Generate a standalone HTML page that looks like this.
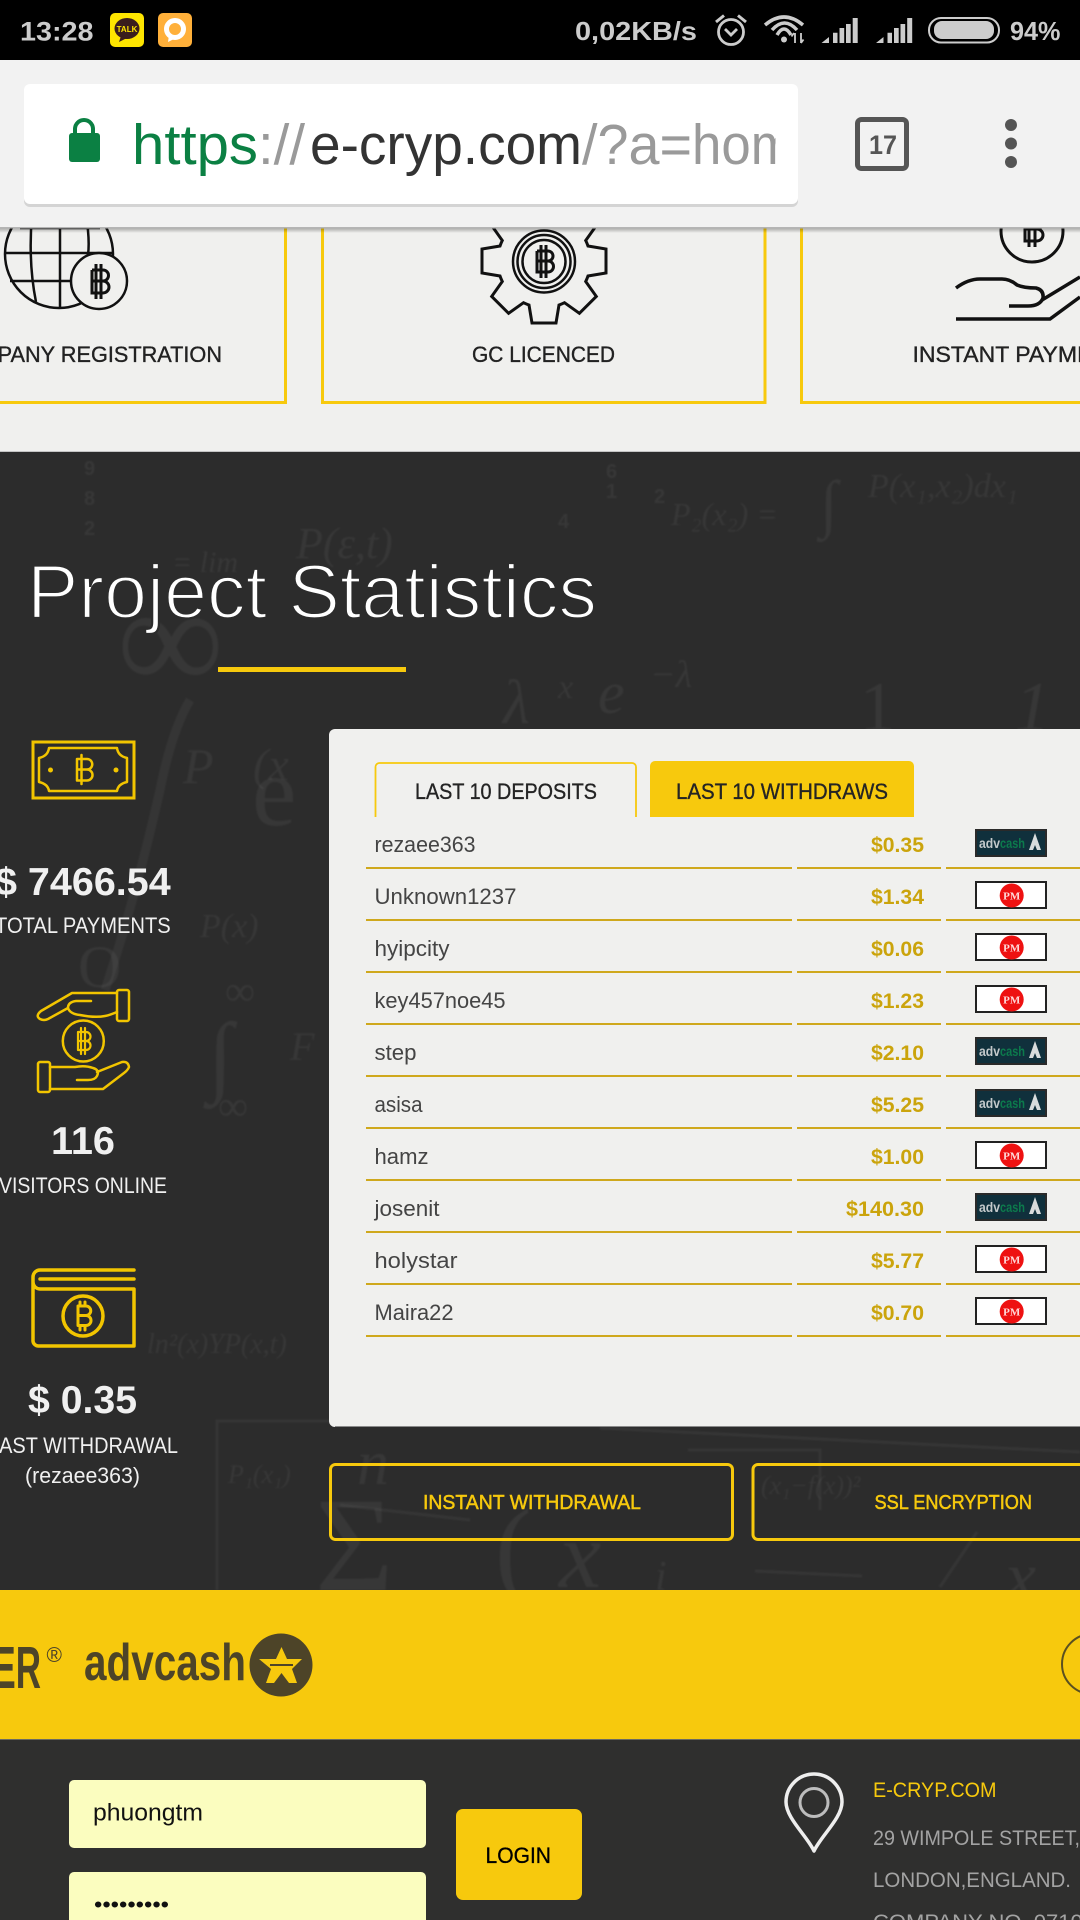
<!DOCTYPE html>
<html lang="en">
<head>
<meta charset="utf-8">
<title>e-cryp.com</title>
<style>
html,body{margin:0;padding:0;background:#2c2c2c;width:1080px;height:1920px;overflow:hidden}
svg{display:block}
text{font-family:"Liberation Sans",sans-serif}
.serif text{font-family:"Liberation Serif",serif;font-style:italic}
</style>
</head>
<body>
<svg xmlns="http://www.w3.org/2000/svg" width="1080" height="1920" viewBox="0 0 1080 1920">
<defs>
<clipPath id="urlclip"><rect x="100" y="100" width="675.500" height="90"/></clipPath>
<linearGradient id="tbshadow" x1="0" y1="0" x2="0" y2="1"><stop offset="0" stop-color="#000" stop-opacity=".3"/><stop offset="1" stop-color="#000" stop-opacity="0"/></linearGradient>
<filter id="soft" x="-5%" y="-5%" width="110%" height="110%"><feGaussianBlur stdDeviation=".8"/></filter>
</defs>

<!-- light section -->
<rect width="1080" height="452" fill="#f0f0ee"/>
<g fill="none" stroke="#f7c90d" stroke-width="3">
<path d="M-160 402.500H285.500V200"/>
<path d="M322.500 200V402.500H765V200"/>
<path d="M801.500 200V402.500H1090"/>
</g>
<g fill="none" stroke="#111" stroke-width="2.500">
<!-- globe -->
<circle cx="59" cy="254" r="54"/>
<path d="M5 253H113M10 281H75M20 228H100M60 200V308M32 215Q28 262 36 302M86 215Q90 240 88 255"/>
<circle cx="99" cy="281" r="28" fill="#f0f0ee"/>
<path stroke-width="3" d="M92 270H103a5.500 5.500 0 0 1 0 11H92M103 281a6 6 0 0 1 0 12H92V270M96 264V299M101 264V299"/>
<!-- gear -->
<path stroke-width="3" transform="translate(544 261)" d="M44 -15L62 -12V12L44 15A46 46 0 0 1 41.700 20.500L52.300 35.400L35.400 52.300L20.500 41.700A46 46 0 0 1 15 44L12 62H-12L-15 44A46 46 0 0 1 -20.500 41.700L-35.400 52.300L-52.300 35.400L-41.700 20.500A46 46 0 0 1 -44 15L-62 12V-12L-44 -15A46 46 0 0 1 -41.700 -20.500L-52.300 -35.400L-35.400 -52.300L-20.500 -41.700A46 46 0 0 1 -15 -44L-12 -62H12L15 -44A46 46 0 0 1 20.500 -41.700L35.400 -52.300L52.300 -35.400L41.700 -20.500A46 46 0 0 1 44 -15Z"/>
<circle cx="544" cy="261.500" r="31"/>
<circle cx="544" cy="261.500" r="26.500"/>
<circle cx="544" cy="261.500" r="21.500"/>
<path stroke-width="3" d="M537 251H548a5 5 0 0 1 0 10H537M548 261a5.500 5.500 0 0 1 0 11H537V251M541 245V278M546 245V278"/>
<!-- hand -->
<circle cx="1032" cy="231" r="31" stroke-width="3"/>
<path stroke-width="3" d="M1025 218H1037a5.500 5.500 0 0 1 0 11H1025M1037 229a6 6 0 0 1 0 12H1025V218M1029 212V247M1035 212V247"/>
<path stroke-width="3.500" d="M956 288Q968 279 980 279H1002Q1010 279 1017 285Q1024 288 1036 288Q1044 290 1043 298Q1040 306 1028 306H1009"/>
<path stroke-width="3.500" d="M1042 300L1080 277M956 319H1050L1080 297"/>
</g>
<g fill="#222" font-size="22" stroke="#222" stroke-width=".35">
<text x="-53" y="362" textLength="275" lengthAdjust="spacingAndGlyphs">COMPANY REGISTRATION</text>
<text x="472" y="362" textLength="143" lengthAdjust="spacingAndGlyphs">GC LICENCED</text>
<text x="912.500" y="362" textLength="226" lengthAdjust="spacingAndGlyphs" lang="en">INSTANT PAYMENTS</text>
</g>

<!-- dark section -->
<rect y="451" width="1080" height="1" fill="#c4c4c4"/>
<rect y="452" width="1080" height="1138" fill="#2c2c2c"/>
<g filter="url(#soft)">
<g class="serif" fill="#fff" fill-opacity=".05">
<text x="671" y="525" font-size="32">P₂(x₂) =</text>
<text x="820" y="525" font-size="64">∫</text>
<text x="868" y="497" font-size="34">P(x₁,x₂)dx₁</text>
<text x="172" y="572" font-size="30">= lim</text>
<text x="296" y="558" font-size="44">P(ε,t)</text>
<text x="503" y="723" font-size="62">λ</text>
<text x="558" y="698" font-size="34">x</text>
<text x="598" y="713" font-size="60">e</text>
<text x="650" y="687" font-size="38">−λ</text>
<text x="860" y="730" font-size="70" style="font-style:normal">1</text>
<text x="1015" y="730" font-size="70">1</text>
<text x="117" y="690" font-size="150" style="font-style:normal">∞</text>
<text x="225" y="1005" font-size="42" style="font-style:normal">∞</text>
<text x="218" y="1120" font-size="42" style="font-style:normal">∞</text>
<text x="208" y="1085" font-size="90">∫</text>
<text x="290" y="1060" font-size="40">F</text>
<text x="183" y="783" font-size="50">P</text>
<text x="253" y="780" font-size="46">(x</text>
<text x="252" y="825" font-size="100" style="font-style:normal">e</text>
<text x="78" y="987" font-size="60" style="font-style:normal">O</text>
<text x="200" y="937" font-size="34">P(x)</text>
<text x="147" y="1353" font-size="28">ln²(x)YP(x,t)</text>
<text x="228" y="1483" font-size="26">P₁(x₁)</text>
<text x="357" y="1484" font-size="64">n</text>
<text x="315" y="1590" font-size="135" style="font-style:normal">Σ</text>
<text x="495" y="1585" font-size="110" style="font-style:normal">(</text>
<text x="559" y="1587" font-size="95">x</text>
<text x="655" y="1590" font-size="42">i</text>
<text x="761" y="1494" font-size="26">(x₁−f(x))²</text>
<text x="1005" y="1600" font-size="70">x</text>
</g>
<path d="M217 1590V1421H330M600 1428L1080 1452M688 1450H820V1510M340 1505L470 1520M755 1571L862 1576M977 1532L940 1587" fill="none" stroke="#fff" stroke-opacity=".045" stroke-width="3"/>
<path d="M190 700Q172 730 160 790Q135 900 105 990" fill="none" stroke="#fff" stroke-opacity=".045" stroke-width="9"/>
<g fill="#fff" fill-opacity=".05" font-size="20" font-weight="bold">
<text x="606" y="478">6</text><text x="606" y="498">1</text><text x="654" y="503">2</text><text x="558" y="528">4</text>
<text x="84" y="475">9</text><text x="84" y="505">8</text><text x="84" y="535">2</text>
</g>
</g>

<!-- heading -->
<text x="27" y="618" font-size="76" fill="#fff" stroke="#2c2c2c" stroke-width="2.200" textLength="570" lengthAdjust="spacingAndGlyphs">Project Statistics</text>
<rect x="218" y="667" width="188" height="5" fill="#f7c90d"/>

<!-- left icons -->
<g fill="none" stroke="#f2c500" stroke-width="3" stroke-linejoin="round" stroke-linecap="round">
<rect x="33" y="742" width="101" height="56" stroke-linejoin="miter"/>
<path stroke-width="2.500" d="M49 748H117Q118 756 127 758V782Q118 784 117 791H49Q48 784 39 782V758Q48 756 49 748Z"/>
<path stroke-width="2.500" d="M77 759H87a5 5 0 0 1 0 10.500H77M87 769.500a5.500 5.500 0 0 1 0 11H77V759M81.500 755V784"/>
<circle cx="50.500" cy="770" r="2.500" fill="#f2c500" stroke="none"/>
<circle cx="116" cy="770" r="2.500" fill="#f2c500" stroke="none"/>
<!-- hands -->
<rect x="117" y="990" width="12" height="31" rx="2" stroke-width="2.500"/>
<path stroke-width="2.500" d="M117 993H72L41 1011Q35 1016 40 1019Q44 1021 48 1019L68 1008"/>
<path stroke-width="2.500" d="M91 1001H76Q68 1002 68 1008Q70 1014 80 1015Q95 1018 105 1016Q110 1015 117 1012"/>
<circle cx="83.300" cy="1041" r="20.500" stroke-width="2.500"/>
<path stroke-width="2.200" d="M78 1032H86a4.500 4.500 0 0 1 0 9H78M86 1041a4.500 4.500 0 0 1 0 9H78V1032M81 1028V1054M85 1028V1054"/>
<rect x="38" y="1062" width="12" height="30" rx="2" stroke-width="2.500"/>
<path stroke-width="2.500" d="M50 1067H75Q85 1065 93 1068Q100 1070 97 1076Q95 1080 88 1080H77M97 1072L122 1062Q128 1061 129 1067Q128 1070 124 1073L103 1089H50"/>
<!-- wallet -->
<path stroke-width="3.500" d="M134 1270H40a7 7 0 0 0 -7 7V1340a5.500 5.500 0 0 0 6 6H134V1289H40a7 7 0 0 1 -7 -7M134 1279H40"/>
<circle cx="83" cy="1316" r="20" stroke-width="3.500"/>
<path stroke-width="3" d="M78 1306H86a4.500 4.500 0 0 1 0 9.500H78M86 1315.500a5 5 0 0 1 0 10H78V1306M80 1302V1306M85 1302V1306M80 1326V1330M85 1326V1330"/>
</g>

<!-- left text -->
<g fill="#f0f0f0">
<text x="-5" y="895" font-size="39" font-weight="bold" textLength="175.700" lengthAdjust="spacingAndGlyphs">$ 7466.54</text>
<text x="-5" y="933" font-size="22" textLength="175.700" lengthAdjust="spacingAndGlyphs">TOTAL PAYMENTS</text>
<text x="51" y="1154" font-size="39" font-weight="bold" textLength="64" lengthAdjust="spacingAndGlyphs">116</text>
<text x="-1" y="1193" font-size="22" textLength="168" lengthAdjust="spacingAndGlyphs">VISITORS ONLINE</text>
<text x="28" y="1413" font-size="39" font-weight="bold" textLength="109" lengthAdjust="spacingAndGlyphs">$ 0.35</text>
<text x="-12" y="1453" font-size="22" textLength="190" lengthAdjust="spacingAndGlyphs">LAST WITHDRAWAL</text>
<text x="25" y="1483" font-size="22" textLength="115" lengthAdjust="spacingAndGlyphs">(rezaee363)</text>
</g>

<!-- panel -->
<rect x="329" y="729" width="780" height="698" rx="6" fill="#f0f0ee"/>
<rect x="335" y="1426" width="745" height="1" fill="#8a8a8a"/>
<path d="M375.500 817V767a4 4 0 0 1 4 -4H632a4 4 0 0 1 4 4V817" fill="none" stroke="#f7c90d" stroke-width="1.800"/>
<path d="M650 817V766a5 5 0 0 1 5 -5H909a5 5 0 0 1 5 5V817Z" fill="#f7c90d"/>
<g fill="#242424" font-size="22" stroke="#242424" stroke-width=".35">
<text x="415" y="799" textLength="182" lengthAdjust="spacingAndGlyphs">LAST 10 DEPOSITS</text>
<text x="676" y="799" textLength="212" lengthAdjust="spacingAndGlyphs">LAST 10 WITHDRAWS</text>
</g>

<!-- rows lines -->
<g fill="#cfa81c">
<rect x="366" y="867" width="426" height="2"/><rect x="797" y="867" width="144" height="2"/><rect x="946" y="867" width="134" height="2"/>
<rect x="366" y="919" width="426" height="2"/><rect x="797" y="919" width="144" height="2"/><rect x="946" y="919" width="134" height="2"/>
<rect x="366" y="971" width="426" height="2"/><rect x="797" y="971" width="144" height="2"/><rect x="946" y="971" width="134" height="2"/>
<rect x="366" y="1023" width="426" height="2"/><rect x="797" y="1023" width="144" height="2"/><rect x="946" y="1023" width="134" height="2"/>
<rect x="366" y="1075" width="426" height="2"/><rect x="797" y="1075" width="144" height="2"/><rect x="946" y="1075" width="134" height="2"/>
<rect x="366" y="1127" width="426" height="2"/><rect x="797" y="1127" width="144" height="2"/><rect x="946" y="1127" width="134" height="2"/>
<rect x="366" y="1179" width="426" height="2"/><rect x="797" y="1179" width="144" height="2"/><rect x="946" y="1179" width="134" height="2"/>
<rect x="366" y="1231" width="426" height="2"/><rect x="797" y="1231" width="144" height="2"/><rect x="946" y="1231" width="134" height="2"/>
<rect x="366" y="1283" width="426" height="2"/><rect x="797" y="1283" width="144" height="2"/><rect x="946" y="1283" width="134" height="2"/>
<rect x="366" y="1335" width="426" height="2"/><rect x="797" y="1335" width="144" height="2"/><rect x="946" y="1335" width="134" height="2"/>
</g>
<g fill="#444" font-size="22">
<text x="374.500" y="852" textLength="101" lengthAdjust="spacingAndGlyphs">rezaee363</text>
<text x="374.500" y="904" textLength="142" lengthAdjust="spacingAndGlyphs">Unknown1237</text>
<text x="374.500" y="956" textLength="75" lengthAdjust="spacingAndGlyphs">hyipcity</text>
<text x="374.500" y="1008" textLength="131" lengthAdjust="spacingAndGlyphs">key457noe45</text>
<text x="374.500" y="1060" textLength="42" lengthAdjust="spacingAndGlyphs">step</text>
<text x="374.500" y="1112" textLength="48" lengthAdjust="spacingAndGlyphs">asisa</text>
<text x="374.500" y="1164" textLength="54" lengthAdjust="spacingAndGlyphs">hamz</text>
<text x="374.500" y="1216" textLength="65" lengthAdjust="spacingAndGlyphs">josenit</text>
<text x="374.500" y="1268" textLength="83" lengthAdjust="spacingAndGlyphs">holystar</text>
<text x="374.500" y="1320" textLength="79" lengthAdjust="spacingAndGlyphs">Maira22</text>
</g>
<g fill="#cba40c" font-size="21" font-weight="bold">
<text x="871" y="852" textLength="53" lengthAdjust="spacingAndGlyphs">$0.35</text>
<text x="871" y="904" textLength="53" lengthAdjust="spacingAndGlyphs">$1.34</text>
<text x="871" y="956" textLength="53" lengthAdjust="spacingAndGlyphs">$0.06</text>
<text x="871" y="1008" textLength="53" lengthAdjust="spacingAndGlyphs">$1.23</text>
<text x="871" y="1060" textLength="53" lengthAdjust="spacingAndGlyphs">$2.10</text>
<text x="871" y="1112" textLength="53" lengthAdjust="spacingAndGlyphs">$5.25</text>
<text x="871" y="1164" textLength="53" lengthAdjust="spacingAndGlyphs">$1.00</text>
<text x="846" y="1216" textLength="78" lengthAdjust="spacingAndGlyphs">$140.30</text>
<text x="871" y="1268" textLength="53" lengthAdjust="spacingAndGlyphs">$5.77</text>
<text x="871" y="1320" textLength="53" lengthAdjust="spacingAndGlyphs">$0.70</text>
</g>

<!-- badges: advcash rows -->
<g font-size="14" font-weight="bold">
<g>
<rect x="976" y="830" width="70" height="26" fill="#10303c" stroke="#2a2a2a" stroke-width="2"/>
<text x="979" y="848" fill="#c4c9cb" textLength="21" lengthAdjust="spacingAndGlyphs">adv</text><text x="1000" y="848" fill="#0c7a4c" textLength="25" lengthAdjust="spacingAndGlyphs">cash</text>
<path d="M1035 833L1041 850H1037L1035 845L1033 850H1029Z" fill="#d8dcdc"/>
</g>
<g>
<rect x="976" y="1038" width="70" height="26" fill="#10303c" stroke="#2a2a2a" stroke-width="2"/>
<text x="979" y="1056" fill="#c4c9cb" textLength="21" lengthAdjust="spacingAndGlyphs">adv</text><text x="1000" y="1056" fill="#0c7a4c" textLength="25" lengthAdjust="spacingAndGlyphs">cash</text>
<path d="M1035 1041L1041 1058H1037L1035 1053L1033 1058H1029Z" fill="#d8dcdc"/>
</g>
<g>
<rect x="976" y="1090" width="70" height="26" fill="#10303c" stroke="#2a2a2a" stroke-width="2"/>
<text x="979" y="1108" fill="#c4c9cb" textLength="21" lengthAdjust="spacingAndGlyphs">adv</text><text x="1000" y="1108" fill="#0c7a4c" textLength="25" lengthAdjust="spacingAndGlyphs">cash</text>
<path d="M1035 1093L1041 1110H1037L1035 1105L1033 1110H1029Z" fill="#d8dcdc"/>
</g>
<g>
<rect x="976" y="1194" width="70" height="26" fill="#10303c" stroke="#2a2a2a" stroke-width="2"/>
<text x="979" y="1212" fill="#c4c9cb" textLength="21" lengthAdjust="spacingAndGlyphs">adv</text><text x="1000" y="1212" fill="#0c7a4c" textLength="25" lengthAdjust="spacingAndGlyphs">cash</text>
<path d="M1035 1197L1041 1214H1037L1035 1209L1033 1214H1029Z" fill="#d8dcdc"/>
</g>
</g>
<!-- badges: PM rows -->
<g>
<rect x="976" y="882" width="70" height="26" fill="#fff" stroke="#222" stroke-width="2"/><circle cx="1011.700" cy="895.500" r="12" fill="#ee1111"/>
<rect x="976" y="934" width="70" height="26" fill="#fff" stroke="#222" stroke-width="2"/><circle cx="1011.700" cy="947.500" r="12" fill="#ee1111"/>
<rect x="976" y="986" width="70" height="26" fill="#fff" stroke="#222" stroke-width="2"/><circle cx="1011.700" cy="999.500" r="12" fill="#ee1111"/>
<rect x="976" y="1142" width="70" height="26" fill="#fff" stroke="#222" stroke-width="2"/><circle cx="1011.700" cy="1155.500" r="12" fill="#ee1111"/>
<rect x="976" y="1246" width="70" height="26" fill="#fff" stroke="#222" stroke-width="2"/><circle cx="1011.700" cy="1259.500" r="12" fill="#ee1111"/>
<rect x="976" y="1298" width="70" height="26" fill="#fff" stroke="#222" stroke-width="2"/><circle cx="1011.700" cy="1311.500" r="12" fill="#ee1111"/>
</g>
<g fill="#ffd9d9" font-size="11" font-weight="bold" text-anchor="middle">
<text x="1011.700" y="899.500" style="font-family:'Liberation Serif',serif">PM</text>
<text x="1011.700" y="951.500" style="font-family:'Liberation Serif',serif">PM</text>
<text x="1011.700" y="1003.500" style="font-family:'Liberation Serif',serif">PM</text>
<text x="1011.700" y="1159.500" style="font-family:'Liberation Serif',serif">PM</text>
<text x="1011.700" y="1263.500" style="font-family:'Liberation Serif',serif">PM</text>
<text x="1011.700" y="1315.500" style="font-family:'Liberation Serif',serif">PM</text>
</g>

<!-- feature buttons -->
<rect x="330.500" y="1464.500" width="402" height="75" rx="5" fill="none" stroke="#f7c90d" stroke-width="3"/>
<rect x="753" y="1464.500" width="400" height="75" rx="5" fill="none" stroke="#f7c90d" stroke-width="3"/>
<g fill="#f7c90d" font-size="20" stroke="#f7c90d" stroke-width=".5">
<text x="423" y="1509" textLength="218" lengthAdjust="spacingAndGlyphs">INSTANT WITHDRAWAL</text>
<text x="874.500" y="1509" textLength="157.500" lengthAdjust="spacingAndGlyphs">SSL ENCRYPTION</text>
</g>

<!-- yellow band -->
<rect y="1590" width="1080" height="149" fill="#f7c90d"/>
<g fill="#4d4428">
<text x="-97" y="1688" font-size="59" font-weight="bold" textLength="138" lengthAdjust="spacingAndGlyphs">PAYEER</text>
<text x="46.500" y="1662" font-size="21">®</text>
<text x="84" y="1680" font-size="52" font-weight="bold" textLength="162" lengthAdjust="spacingAndGlyphs">advcash</text>
<circle cx="281" cy="1665" r="31.500"/>
</g>
<path d="M281.500 1647L287 1659H302L292 1669L297 1683H289L281.500 1673L274 1683H266L271 1669L259 1659H276Z" fill="#f7c90d"/>
<rect x="270" y="1664" width="23" height="2" fill="#4d4428"/>
<circle cx="1092" cy="1664" r="30" fill="none" stroke="#5a5020" stroke-width="2"/>

<!-- footer -->
<rect y="1739" width="1080" height="181" fill="#2f2f2e"/>
<rect y="1739" width="1080" height="1" fill="#6b6b60"/>
<rect x="69" y="1780" width="357" height="68" rx="5" fill="#fbfdbf"/>
<rect x="69" y="1872" width="357" height="60" rx="5" fill="#fbfdbf"/>
<text x="93" y="1820.500" font-size="24" fill="#111" textLength="110" lengthAdjust="spacingAndGlyphs">phuongtm</text>
<text x="94" y="1912" font-size="22" fill="#111" textLength="75" lengthAdjust="spacingAndGlyphs">•••••••••</text>
<rect x="456" y="1809" width="126" height="91" rx="7" fill="#f7c90d"/>
<text x="485.500" y="1863" font-size="22" fill="#000" stroke="#000" stroke-width=".3" textLength="65.500" lengthAdjust="spacingAndGlyphs">LOGIN</text>
<path d="M814 1851C807 1836 786 1818 786 1802A28 28 0 0 1 842 1802C842 1818 821 1836 814 1851Z" fill="none" stroke="#eee" stroke-width="3.500" stroke-linejoin="round"/>
<circle cx="814" cy="1802.500" r="14" fill="none" stroke="#bdbdbd" stroke-width="3"/>
<text x="873" y="1797" font-size="21" fill="#f7c90d" textLength="123.500" lengthAdjust="spacingAndGlyphs">E-CRYP.COM</text>
<g fill="#a3a3a3" font-size="21">
<text x="873" y="1845" textLength="207" lengthAdjust="spacingAndGlyphs">29 WIMPOLE STREET,</text>
<text x="873" y="1887" textLength="198" lengthAdjust="spacingAndGlyphs">LONDON,ENGLAND.</text>
<text x="873" y="1929" textLength="222" lengthAdjust="spacingAndGlyphs">COMPANY NO. 07106</text>
</g>

<!-- browser toolbar -->
<rect y="228" width="1080" height="5" fill="url(#tbshadow)"/>
<rect y="60" width="1080" height="168" fill="#f2f2f2"/>
<rect y="227" width="1080" height="1.500" fill="#b5b5b5"/>
<rect x="24" y="86" width="774" height="121" rx="6" fill="#000" fill-opacity=".12"/>
<rect x="24" y="84" width="774" height="120" rx="6" fill="#fff"/>
<path d="M75 136V129a9 9 0 0 1 18 0V136" fill="none" stroke="#0b8043" stroke-width="4"/>
<rect x="69" y="133" width="31" height="29" rx="3" fill="#0b8043"/>
<g font-size="56.500" clip-path="url(#urlclip)">
<text x="132" y="164" fill="#0b8043" textLength="126" lengthAdjust="spacingAndGlyphs">https</text>
<text x="258" y="164" fill="#9a9a9a" textLength="47" lengthAdjust="spacingAndGlyphs">://</text>
<text x="310" y="164" fill="#333" textLength="272" lengthAdjust="spacingAndGlyphs">e-cryp.com</text>
<text x="582" y="164" fill="#9a9a9a" textLength="110" lengthAdjust="spacingAndGlyphs">/?a=</text>
<text x="692" y="164" fill="#9a9a9a" textLength="132" lengthAdjust="spacingAndGlyphs">home</text>
</g>
<rect x="857.500" y="119.500" width="49" height="49" rx="4" fill="none" stroke="#555" stroke-width="5"/>
<text x="869" y="154" font-size="27" font-weight="bold" fill="#555" textLength="28" lengthAdjust="spacingAndGlyphs">17</text>
<g fill="#555">
<ellipse cx="1011" cy="125" rx="6" ry="6"/><ellipse cx="1011" cy="143.500" rx="6" ry="6"/><ellipse cx="1011" cy="162" rx="6" ry="6"/>
</g>

<!-- status bar -->
<rect width="1080" height="60" fill="#000"/>
<text x="20" y="40.500" font-size="27" font-weight="bold" fill="#ccc" textLength="73.500" lengthAdjust="spacingAndGlyphs">13:28</text>
<rect x="110" y="13" width="34" height="34" rx="5" fill="#fee500"/>
<ellipse cx="127" cy="28.500" rx="12.500" ry="10.500" fill="#3a1d1d"/>
<path d="M121 36L119 42L127 38Z" fill="#3a1d1d"/>
<text x="127" y="32" font-size="8" font-weight="bold" fill="#fee500" text-anchor="middle">TALK</text>
<rect x="158" y="13" width="34" height="34" rx="5" fill="#ffb03a"/>
<circle cx="175" cy="29" r="8.500" fill="none" stroke="#fff" stroke-width="5"/>
<path d="M169 35L168 42L176 38Z" fill="#fff"/>
<text x="575" y="40" font-size="26" font-weight="bold" fill="#ccc" textLength="122" lengthAdjust="spacingAndGlyphs">0,02KB/s</text>
<g fill="none" stroke="#ccc" stroke-width="2.800">
<circle cx="731" cy="32" r="12.500"/>
<path d="M725 29L731 35L737 29"/>
<path d="M716 22L724 15.500M738 15.500L746 22" stroke-width="3"/>
<path d="M765 25Q784 9 803 25" stroke-width="3.500"/>
<path d="M772 30Q784.500 16 797 30" stroke-width="3.500"/>
<path d="M777 35Q784 23 791 35" stroke-width="3.500"/>
</g>
<circle cx="784" cy="39.500" r="3" fill="#ccc"/>
<path d="M795 33V43M794 33l-2.500 3.500M801 33V43M801 43l2.500 -3.500" fill="none" stroke="#ccc" stroke-width="1.800"/>
<g fill="#ccc">
<path d="M821.500 43L829 37V43ZM833 32.700h4.500V43H833ZM839.500 28h4.700V43h-4.700ZM846 24h4.700V43H846ZM852.700 18h5V43h-5Z"/>
<path d="M876 43L883.500 37V43ZM887.500 32.700h4.500V43h-4.500ZM894 28h4.700V43H894ZM900.500 24h4.700V43h-4.700ZM907.200 18h5V43h-5Z"/>
<rect x="934" y="21" width="60" height="18" rx="8"/>
</g>
<rect x="929" y="18" width="70" height="24.500" rx="12" fill="none" stroke="#ccc" stroke-width="2"/>
<text x="1010" y="40" font-size="26" font-weight="bold" fill="#ccc" textLength="50.500" lengthAdjust="spacingAndGlyphs">94%</text>
</svg>
</body>
</html>
